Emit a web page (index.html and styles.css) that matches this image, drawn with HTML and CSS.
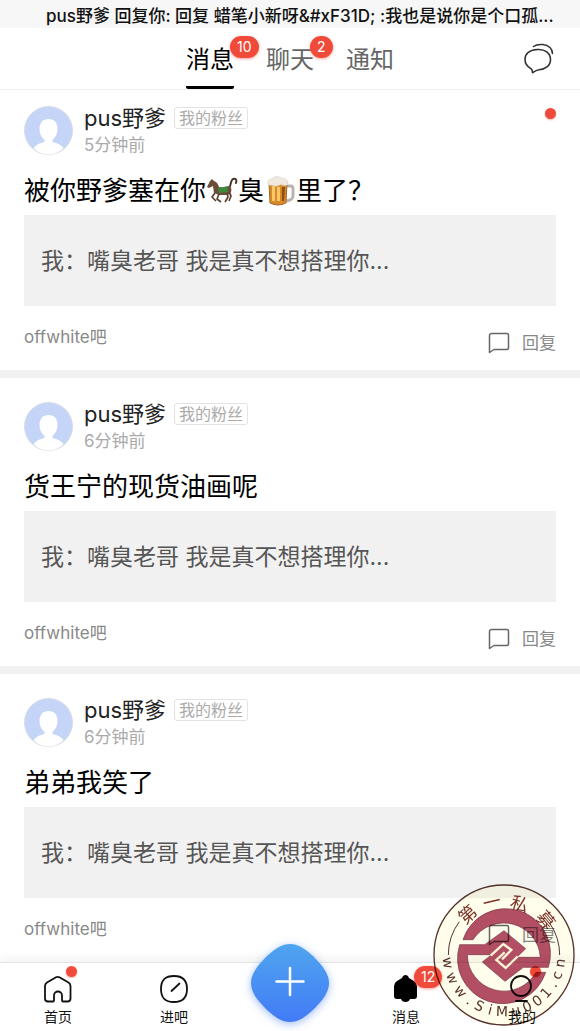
FILE: index.html
```
<!DOCTYPE html>
<html lang="zh-CN">
<head>
    <meta charset="UTF-8">
    <meta name="viewport" content="width=device-width, initial-scale=1.0">
    <title>消息</title>
    <link rel="stylesheet" href="styles.css">
</head>
<body>
    <!-- Iconos compartidos -->
    <svg class="sprite" aria-hidden="true">
        <symbol id="avatar" viewBox="0 0 49 49">
            <circle cx="24.500" cy="24.500" r="24" fill="#c5d5f7" stroke="#d9dbe6"/>
            <path d="M24.500 13c6 0 9 4 9 10 0 5-2 8-5 11v2c5 1 9 3 11 6-4 4-9 6.500-15 6.500S13.500 46 9.500 42c2-3 6-5 11-6v-2c-3-3-5-6-5-11 0-6 3-10 9-10z" fill="#fff"/>
        </symbol>
        <symbol id="bubble" viewBox="0 0 22 22">
            <path d="M3.500 1.500h15.500a1.500 1.500 0 0 1 1.500 1.500v13a1.500 1.500 0 0 1-1.500 1.500H6L1.500 20.500V3.500a2 2 0 0 1 2-2z" fill="none" stroke="#666" stroke-width="1.500" stroke-linejoin="round"/>
        </symbol>
    </svg>

    <div class="notice">pus野爹 回复你: 回复 蜡笔小新呀&amp;#xF31D; :我也是说你是个口孤...</div>

    <header class="header">
        <nav class="tabs">
            <a href="#" class="tab active">消息<span class="badge">10</span></a>
            <a href="#" class="tab">聊天<span class="badge">2</span></a>
            <a href="#" class="tab">通知</a>
        </nav>
        <button class="chat-button" aria-label="聊天">
            <svg width="32" height="32" viewBox="0 0 32 32" fill="none" stroke="#333" stroke-width="1.600" stroke-linecap="round" stroke-linejoin="round">
                <path d="M10.500 3.500C13 1.500 16 1.300 19.500 1.500 26 2 29.500 6 29.500 10.500"/>
                <path d="M14.500 6.500C22 6 27.500 10 27.500 16.500S22 26.500 16 26.700c-2.500.2-4 1.500-6.500 3 0-2 0-3-1.500-4C4 23.500 2 20.500 2 16.500 2 10.500 7 7 14.500 6.500z"/>
            </svg>
        </button>
    </header>

    <main>
        <!-- Mensaje 1 -->
        <article class="message">
            <div class="user">
                <svg class="avatar"><use href="#avatar"/></svg>
                <div>
                    <div class="name-row"><span class="name">pus野爹</span><span class="tag">我的粉丝</span></div>
                    <div class="time">5分钟前</div>
                </div>
                <span class="dot unread"></span>
            </div>
            <h2 class="text">被你野爹塞在你<svg class="emoji" viewBox="0 0 32 32" role="img" aria-label="马">
                    <path d="M23 13c2-1 1-7 4-9 3-1 4 1 3 4" fill="none" stroke="#4b352b" stroke-width="2" stroke-linecap="round"/>
                    <path d="M6 4l2 2c3 1 4 3 5 6 4 1 7 0 10-1 3 1 3 5 1 8l-4 1-7 0-5-2-1-7-4 2-2-1 3-6z" fill="#6b4d39"/>
                    <path d="M9 18l-3 4 4 4M13 19l-2 5 4 3M21 18l1 4-3 5M23 17l2 4-2 5" fill="none" stroke="#5c4131" stroke-width="1.700" stroke-linejoin="round"/>
                    <path d="M12 12c4 1 6 0 9-1l1 6-9 1z" fill="#3c8b3d"/>
                </svg>臭<svg class="emoji" viewBox="0 0 32 32" role="img" aria-label="啤酒">
                    <path d="M22 11h5q2 0 2 3v7q0 4-7 5" fill="none" stroke="#b9b4ae" stroke-width="3"/>
                    <path d="M5 7h18l-1 21q-8 4-16 0z" fill="#d88a26" stroke="#a1672c"/>
                    <path d="M8 11h3v15H8zm5 1h3v14h-3z" fill="#f7c768"/>
                    <path d="M18 12h3l-1 14h-2z" fill="#8f4e16"/>
                    <path d="M4 9c-1-3 1-5 4-5 3-3 6-3 9-1 4 0 7 2 7 5s-3 3-6 2-4 2-7 1-6 0-7-2z" fill="#efe9df" stroke="#cfc6ba" stroke-width=".5"/>
                </svg>里了？</h2>
            <div class="quote">我：嘴臭老哥 我是真不想搭理你...</div>
            <div class="foot">
                <a href="#" class="forum">offwhite吧</a>
                <button class="reply"><svg class="bubble"><use href="#bubble"/></svg>回复</button>
            </div>
        </article>

        <!-- Mensaje 2 -->
        <article class="message">
            <div class="user">
                <svg class="avatar"><use href="#avatar"/></svg>
                <div>
                    <div class="name-row"><span class="name">pus野爹</span><span class="tag">我的粉丝</span></div>
                    <div class="time">6分钟前</div>
                </div>
            </div>
            <h2 class="text">货王宁的现货油画呢</h2>
            <div class="quote">我：嘴臭老哥 我是真不想搭理你...</div>
            <div class="foot">
                <a href="#" class="forum">offwhite吧</a>
                <button class="reply"><svg class="bubble"><use href="#bubble"/></svg>回复</button>
            </div>
        </article>

        <!-- Mensaje 3 -->
        <article class="message">
            <div class="user">
                <svg class="avatar"><use href="#avatar"/></svg>
                <div>
                    <div class="name-row"><span class="name">pus野爹</span><span class="tag">我的粉丝</span></div>
                    <div class="time">6分钟前</div>
                </div>
            </div>
            <h2 class="text">弟弟我笑了</h2>
            <div class="quote">我：嘴臭老哥 我是真不想搭理你...</div>
            <div class="foot">
                <a href="#" class="forum">offwhite吧</a>
                <button class="reply"><svg class="bubble"><use href="#bubble"/></svg>回复</button>
            </div>
        </article>
    </main>

    <!-- Barra inferior -->
    <nav class="bottom-bar">
        <a href="#" class="item">
            <span class="icon">
                <svg width="30" height="30" viewBox="0 0 30 30" fill="none" stroke="#111" stroke-width="1.800" stroke-linejoin="round">
                    <path d="M13 3.300q1.700-1 3.400 0L25.500 8.500q2 1.200 2 3.500v12.500q0 3-3 3H20q-1 0-1-1v-5a4 4 0 0 0-8 0v5q0 1-1 1H5q-3 0-3-3V12q0-2.300 2-3.500z"/>
                </svg>
                <span class="dot"></span>
            </span>
            首页
        </a>
        <a href="#" class="item">
            <span class="icon">
                <svg width="30" height="30" viewBox="0 0 30 30" fill="none" stroke="#111" stroke-width="1.800" stroke-linecap="round">
                    <path d="M15 2C24 2 28 6 28 15s-4 13-13 13S2 24 2 15 6 2 15 2zM12.500 17L20.500 9.500"/>
                </svg>
            </span>
            进吧
        </a>
        <button class="plus" aria-label="发布">
            <svg width="80" height="80" viewBox="0 0 80 80">
                <defs>
                    <linearGradient id="blue" x1="0" y1="0" x2="0" y2="1">
                        <stop offset="0" stop-color="#4fa5ef"/>
                        <stop offset="1" stop-color="#427bf6"/>
                    </linearGradient>
                </defs>
                <path d="M40 1C48 1 54 5 63 13 73 23 79 31 79 40S73 57 63 67C54 75 48 79 40 79S26 75 17 67C7 57 1 49 1 40S7 23 17 13C26 5 32 1 40 1z" fill="url(#blue)"/>
                <path d="M40 25v27M26.500 38.500h27" stroke="#fff" stroke-width="2.500" stroke-linecap="round"/>
            </svg>
        </button>
        <a href="#" class="item">
            <span class="icon">
                <svg width="30" height="30" viewBox="0 0 30 30">
                    <path d="M11 4q1-3 3.500-3T18 4l5 3q3 2 3 5v10q0 3-3 3h-4q-1 3-4.500 3T10 25H6q-3 0-3-3V12q0-3 3-5z" fill="#000"/>
                </svg>
                <span class="badge">12</span>
            </span>
            消息
        </a>
        <a href="#" class="item">
            <span class="icon">
                <svg width="30" height="30" viewBox="0 0 30 30" fill="none" stroke="#111" stroke-width="1.800" stroke-linecap="round">
                    <circle cx="14" cy="12" r="10"/>
                    <path d="M9 27h11"/>
                </svg>
                <span class="dot"></span>
            </span>
            我的
        </a>
    </nav>

    <!-- Sello -->
    <svg class="stamp" viewBox="-213 -213 426 426" role="img" aria-label="第一私募 www.SiMu001.cn">
        <circle r="210" fill="#fffdec" stroke="#57332a" stroke-width="4"/>
        <path d="M-167 0A167 167 0 0 1-134-100M167 0A167 167 0 0 0 138-94" fill="none" stroke="#57332a" stroke-width="3"/>
        <g fill="#b34f64" stroke="#763044" stroke-width="2">
            <path d="M-123-46A133 133 0 0 1 133 37H58L3 79-65 21-37-1H-110A110 110 0 0 0 96 52H125A135 135 0 0 1-133-31H-58L0-73 65-19 38 7H109A110 110 0 0 0-93-46z"/>
        </g>
        <path d="M-40 2L-2-33 22-15-6 13M41 4L5 39-23 15 2-8" fill="none" stroke="#fff8d8" stroke-width="7"/>
        <g class="seal-text">
            <text y="-144" transform="rotate(-42)">第</text>
            <text y="-144" transform="rotate(-13)">一</text>
            <text y="-140" transform="rotate(17)">私</text>
            <text y="-144" transform="rotate(50)">募</text>
        </g>
        <g class="seal-url">
            <text y="184" transform="rotate(82)">w</text>
            <text y="184" transform="rotate(66)">w</text>
            <text y="184" transform="rotate(50)">w</text>
            <text y="184" transform="rotate(37)">.</text>
            <text y="184" transform="rotate(26)">S</text>
            <text y="184" transform="rotate(14)">i</text>
            <text y="184" transform="rotate(2)">M</text>
            <text y="184" transform="rotate(-12)">u</text>
            <text y="184" transform="rotate(-24)">0</text>
            <text y="184" transform="rotate(-36)">0</text>
            <text y="184" transform="rotate(-48)">1</text>
            <text y="184" transform="rotate(-59)">.</text>
            <text y="184" transform="rotate(-69)">c</text>
            <text y="184" transform="rotate(-82)">n</text>
        </g>
    </svg>
</body>
</html>
```
FILE: styles.css
```
/* Estilos generales */
* {
    box-sizing: border-box;
}

body {
    margin: 0;
    font-family: Inter, "Noto Sans CJK SC", sans-serif;
    color: #111;
    background-color: #fff;
}

a {
    color: inherit;
    text-decoration: none;
}

button {
    padding: 0;
    border: none;
    background: none;
    font: inherit;
    color: inherit;
    cursor: pointer;
}

svg {
    display: block;
}

.sprite {
    position: absolute;
    width: 0;
    height: 0;
}

/* Aviso superior */
.notice {
    padding: 4px 16px 0 46px;
    background-color: #f7f7f7;
    font-size: 17px;
    font-weight: 500;
    line-height: 24px;
    white-space: nowrap;
    overflow: hidden;
}

/* Cabecera con pestañas */
.header {
    display: grid;
    grid-template-columns: 1fr auto 1fr;
    align-items: center;
    border-bottom: 1px solid #f2f2f2;
}

.tabs {
    grid-column: 2;
    display: flex;
    gap: 32px;
}

.tab {
    position: relative;
    padding: 14px 0 8px;
    border-bottom: 3px solid transparent;
    font-size: 24px;
    line-height: 36px;
    color: #666;
}

.tab.active {
    border-color: #000;
    border-radius: 2px;
    color: #000;
}

.chat-button {
    justify-self: end;
    margin-right: 25px;
}

/* Avisos rojos */
.badge {
    position: absolute;
    top: 8px;
    left: 44px;
    min-width: 22px;
    padding: 0 7px;
    border-radius: 11px;
    background-color: #f04a3a;
    box-shadow: 0 1px 3px rgba(240, 74, 58, 0.5);
    color: #fff;
    font-size: 14px;
    line-height: 22px;
}

.dot {
    width: 11px;
    height: 11px;
    border-radius: 50%;
    background-color: #f04a3a;
    box-shadow: 0 1px 2px rgba(240, 74, 58, 0.4);
}

/* Mensajes */
.message {
    padding: 24px 24px 15px;
    border-bottom: 8px solid #f1f1f1;
}

.message:first-child {
    padding-top: 16px;
}

.message:last-child {
    border-bottom: none;
}

.user {
    display: flex;
    gap: 11px;
}

.avatar {
    width: 49px;
    height: 49px;
}

.name-row {
    display: flex;
    align-items: center;
    gap: 8px;
}

.name {
    font-size: 22px;
    line-height: 24px;
    color: #222;
}

.tag {
    padding: 0 4px;
    border: 1px solid #e3e3e3;
    border-radius: 3px;
    font-size: 16px;
    line-height: 20px;
    color: #aaa;
}

.time {
    margin-top: 5px;
    font-size: 17px;
    line-height: 20px;
    color: #aaa;
}

.unread {
    margin: 2px 0 0 auto;
}

.text {
    display: flex;
    align-items: center;
    margin: 18px 0 6px;
    font-size: 26px;
    font-weight: 400;
    line-height: 36px;
    color: #000;
}

.emoji {
    width: 32px;
    height: 32px;
}

.quote {
    padding: 28px 17px 27px;
    background-color: #f1f1f1;
    font-size: 23px;
    line-height: 36px;
    color: #555;
}

.foot {
    display: flex;
    justify-content: space-between;
    align-items: flex-start;
    padding-top: 19px;
    font-size: 17px;
    line-height: 24px;
    color: #888;
}

.reply {
    display: flex;
    align-items: center;
    gap: 12px;
    margin-top: 6px;
}

.bubble {
    width: 22px;
    height: 22px;
}

/* Barra inferior */
.bottom-bar {
    position: sticky;
    bottom: 0;
    display: grid;
    grid-template-columns: repeat(5, 1fr);
    justify-items: center;
    padding: 11px 0 4px;
    border-top: 1px solid #e4e4e4;
    background-color: #fff;
    box-shadow: 0 -4px 10px rgba(0, 0, 0, 0.05);
}

.item {
    display: flex;
    flex-direction: column;
    align-items: center;
    gap: 3px;
    font-size: 14px;
    line-height: 20px;
}

.icon {
    position: relative;
}

.icon .dot {
    position: absolute;
    top: -8px;
    right: -4px;
}

.icon .badge {
    top: -8px;
    left: 23px;
}

.plus {
    position: absolute;
    top: -20px;
    left: 50%;
    transform: translateX(-50%);
    filter: drop-shadow(0 2px 4px rgba(66, 123, 246, 0.5));
}

.bottom-bar .item:nth-of-type(3) {
    grid-column: 4;
}

/* Sello sobre la esquina */
.stamp {
    position: fixed;
    right: 5px;
    bottom: 5px;
    width: 142px;
    height: 142px;
    mix-blend-mode: multiply;
    pointer-events: none;
}

.seal-text {
    fill: #7c3428;
    font-size: 54px;
    text-anchor: middle;
}

.seal-url {
    fill: #57332a;
    font-family: "DejaVu Sans", sans-serif;
    font-size: 42px;
    text-anchor: middle;
}
```
